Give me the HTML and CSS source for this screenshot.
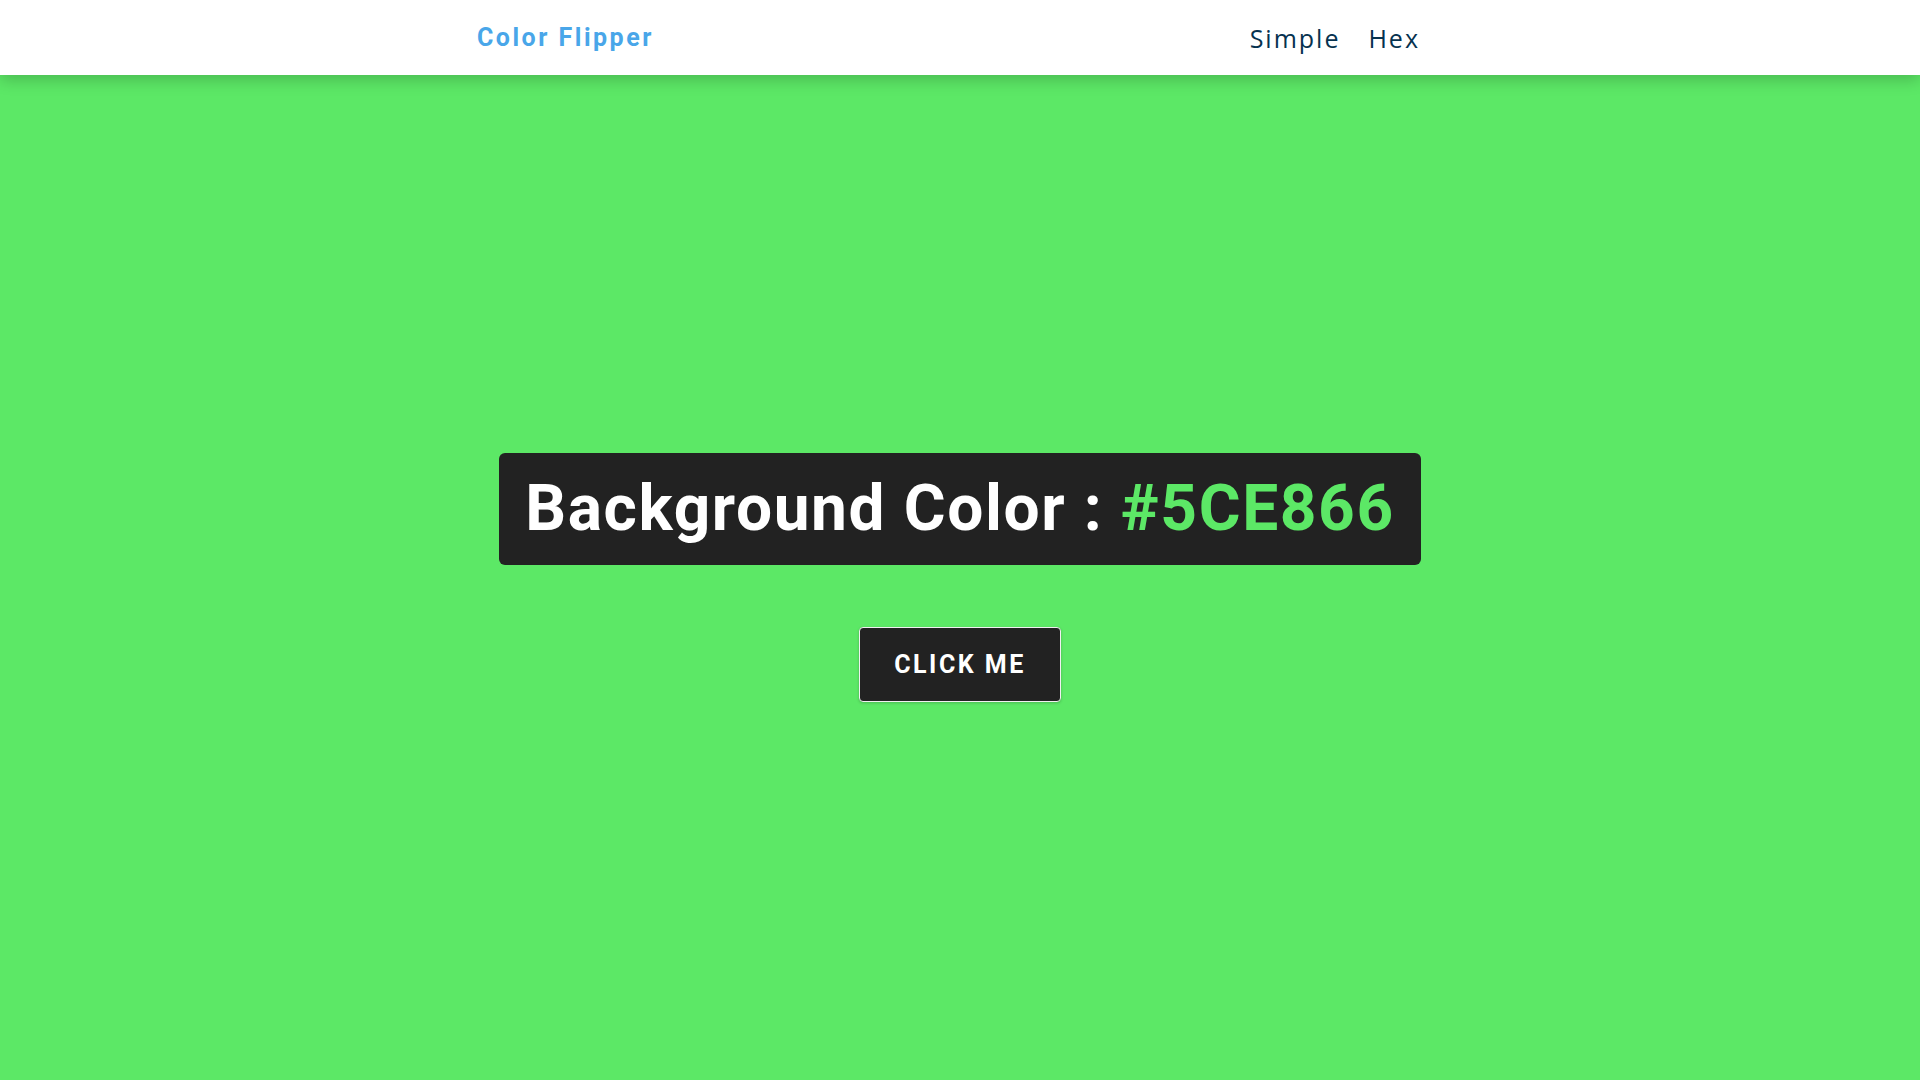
FILE: index.html
```
<!DOCTYPE html>
<html lang="en">
<head>
<meta charset="utf-8">
<title>Color Flipper</title>
<link rel="stylesheet" href="styles.css">
</head>
<body>
<nav class="nav">
  <div class="nav-center">
    <h4 class="logo">Color Flipper</h4>
    <ul class="nav-links">
      <li><a href="#">simple</a></li>
      <li><a href="#">hex</a></li>
    </ul>
  </div>
</nav>
<main class="container">
  <h2 class="title">Background Color : <span class="color">#5CE866</span></h2>
  <button class="btn-hero" type="button">click me</button>
</main>
</body>
</html>
```
FILE: styles.css
```
* { box-sizing: border-box; margin: 0; padding: 0; }
html, body { height: 100%; }
body {
  background: #5CE866;
  font-family: "Open Sans", sans-serif;
  display: flex;
  flex-direction: column;
}
.nav {
  background: #fff;
  height: 75px;
  flex: 0 0 75px;
  display: flex;
  align-items: center;
  box-shadow: 0 5px 15px rgba(0,0,0,0.2);
  position: relative;
  z-index: 1;
}
.nav-center {
  width: 966px;
  margin: 0 auto;
  display: flex;
  justify-content: space-between;
  align-items: center;
  padding-right: 23px;
}
.logo {
  font-family: Roboto, sans-serif;
  font-weight: 700;
  font-size: 25px;
  letter-spacing: 2.5px;
  color: #49a6e9;
}
.nav-links {
  list-style: none;
  display: flex;
  gap: 28px;
}
.nav-links a {
  text-decoration: none;
  text-transform: capitalize;
  font-family: "Open Sans", sans-serif;
  font-size: 25px;
  letter-spacing: 2px;
  color: #06324f;
}
.container {
  flex: 1;
  display: flex;
  flex-direction: column;
  align-items: center;
  justify-content: center;
}
.title {
  background: #222;
  color: #fff;
  font-family: Roboto, sans-serif;
  font-weight: 700;
  font-size: 64px;
  line-height: 1;
  letter-spacing: 1.6px;
  padding: 24px 26px 24px 26px;
  border-radius: 6px;
  margin-bottom: 62px;
}
.color { color: #5CE866; }
.btn-hero {
  width: 202px;
  height: 75px;
  background: #222;
  color: #fff;
  border: 1px solid #f0f0f0;
  border-radius: 4px;
  font-family: Roboto, sans-serif;
  font-weight: 700;
  font-size: 25px;
  letter-spacing: 2.5px;
  text-transform: uppercase;
  box-shadow: 0 1px 3px rgba(0,0,0,0.2);
  cursor: pointer;
}
```
